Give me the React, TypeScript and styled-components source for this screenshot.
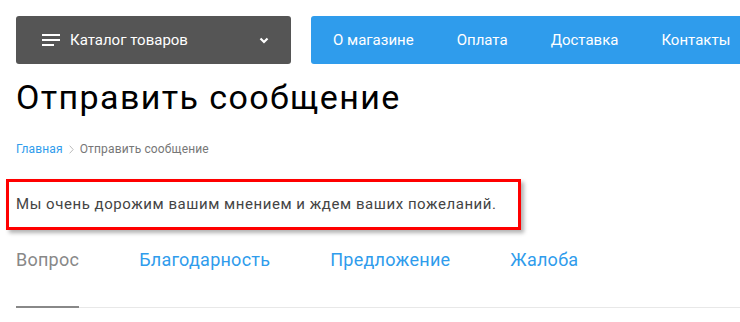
import styled, { createGlobalStyle } from "styled-components";

const navLinks = ["О магазине", "Оплата", "Доставка", "Контакты"];
const tabs = ["Вопрос", "Благодарность", "Предложение", "Жалоба"];

function App() {
  return (
    <>
      <GlobalStyle />
      <Page>
        <Header>
          <CatalogButton>
            <CatalogLabel>
              <svg width="18" height="12" viewBox="0 0 18 12">
                <rect x="0" y="0" width="18" height="2" fill="#fff" />
                <rect x="0" y="5" width="18" height="2" fill="#fff" />
                <rect x="0" y="10" width="12" height="2" fill="#fff" />
              </svg>
              Каталог товаров
            </CatalogLabel>
            <svg width="10" height="7" viewBox="0 0 10 7">
              <path d="M1.5 1.5 L5 5 L8.5 1.5" stroke="#fff" strokeWidth="2.2" fill="none" />
            </svg>
          </CatalogButton>
          <Nav>
            {navLinks.map((link) => (
              <NavLink key={link}>{link}</NavLink>
            ))}
          </Nav>
        </Header>

        <Title>Отправить сообщение</Title>

        <Breadcrumbs>
          <Crumb href="#">Главная</Crumb>
          <svg width="5" height="9" viewBox="0 0 5 9">
            <path d="M0.7 0.7 L4.2 4.5 L0.7 8.3" stroke="#bbb" strokeWidth="1" fill="none" />
          </svg>
          <span>Отправить сообщение</span>
        </Breadcrumbs>

        <Notice>Мы очень дорожим вашим мнением и ждем ваших пожеланий.</Notice>

        <Tabs>
          {tabs.map((tab, i) => (
            <Tab key={tab} $active={i === 0}>
              {tab}
            </Tab>
          ))}
        </Tabs>
      </Page>
    </>
  );
}

const GlobalStyle = createGlobalStyle`
  body {
    margin: 0;
    overflow: hidden;
    background: #fff;
    font-family: Roboto, "Liberation Sans", sans-serif;
  }
`;

const Page = styled.div`
  width: 780px;
  padding: 16px;
  box-sizing: border-box;
`;

const Header = styled.div`
  display: flex;
  gap: 20px;
  height: 48px;
`;

const CatalogButton = styled.div`
  width: 275px;
  flex-shrink: 0;
  box-sizing: border-box;
  display: flex;
  align-items: center;
  justify-content: space-between;
  padding: 0 22px 0 26px;
  background: #555555;
  border-radius: 3px;
  color: #fff;
`;

const CatalogLabel = styled.div`
  display: flex;
  align-items: center;
  gap: 10px;
  font-size: 15px;
`;

const Nav = styled.nav`
  flex: 1;
  display: flex;
  align-items: center;
  padding: 0 0 0 22px;
  gap: 43px;
  background: #2f9cec;
  border-radius: 3px 0 0 3px;
`;

const NavLink = styled.a`
  color: #fff;
  font-size: 15px;
  text-decoration: none;
`;

const Title = styled.h1`
  margin: 13px 0 0;
  font-size: 34px;
  line-height: 40px;
  font-weight: 400;
  letter-spacing: 1.4px;
  color: #000;
`;

const Breadcrumbs = styled.div`
  margin-top: 24px;
  display: flex;
  align-items: center;
  gap: 6px;
  font-size: 12px;
  line-height: 16px;
  letter-spacing: 0.15px;
  color: #777;
`;

const Crumb = styled.a`
  color: #2f9cec;
  text-decoration: none;
`;

const Notice = styled.div`
  margin: 22px 0 0 -10px;
  width: fit-content;
  padding: 11px 21px 12px 7px;
  border: 3px solid #ff0000;
  box-shadow: 3px 3px 4px rgba(0, 0, 0, 0.3);
  font-size: 15px;
  line-height: 22px;
  letter-spacing: 0.55px;
  color: #444;
`;

const Tabs = styled.div`
  margin-top: 18px;
  display: flex;
  gap: 60px;
  border-bottom: 1px solid #e8e8e8;
`;

const Tab = styled.div<{ $active?: boolean }>`
  font-size: 18px;
  line-height: 24px;
  letter-spacing: 0.25px;
  padding-bottom: 34px;
  margin-bottom: -1px;
  color: ${(p) => (p.$active ? "#888" : "#2f9cec")};
  border-bottom: 2px solid ${(p) => (p.$active ? "#888" : "transparent")};
`;

export default App;
